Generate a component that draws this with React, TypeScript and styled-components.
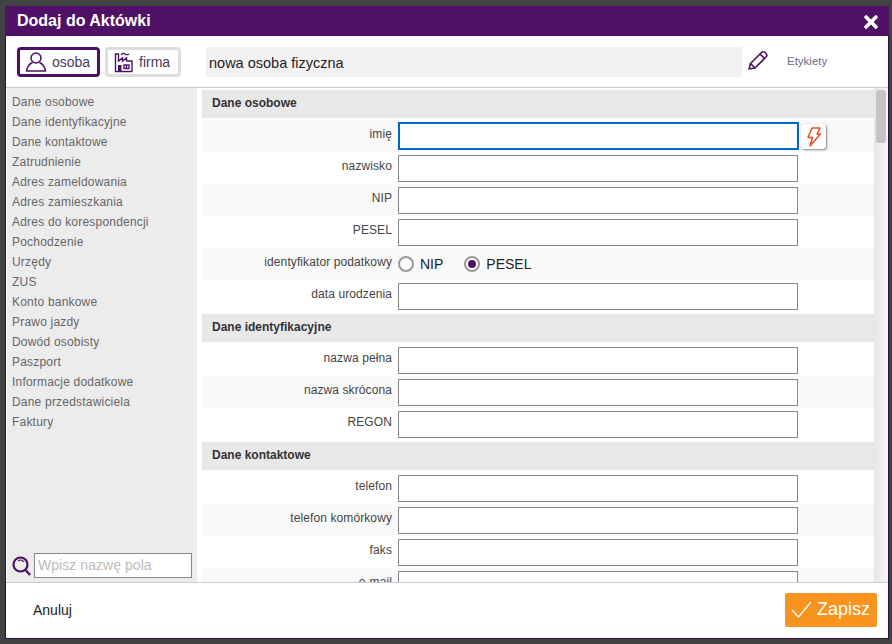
import React from "react";
import styled, { createGlobalStyle } from "styled-components";
import { FaTimes } from "react-icons/fa";

const Global = createGlobalStyle`
  html, body { margin: 0; padding: 0; height: 100%; background: #424242; }
  * { box-sizing: border-box; }
  #root { height: 100%; }
`;
const Page = styled.div`
  width: 892px; height: 644px; padding: 6px 3px 5px 5px; overflow: hidden;
  font-family: "Liberation Sans", Arial, sans-serif;
`;
const Dialog = styled.div`
  height: 633px; display: flex; flex-direction: column; background: #fff;
  border: 1px solid #2e1040; border-top: 0;
`;
const TitleBar = styled.div`
  flex: 0 0 30px; display: flex; align-items: center; justify-content: space-between;
  background: #4e1165; color: #fff; padding: 0 8px 0 12px; margin: 0 -1px;
`;
const Title = styled.div`font-size: 16px; font-weight: bold;`;
const Close = styled.div`display: flex; font-size: 20px; margin-top: 1px;`;
const Toolbar = styled.div`
  flex: 0 0 52px; display: flex; align-items: flex-start; padding: 11px 0 0 11px;
  border-bottom: 1px solid #ccc;
`;
const TypeButton = styled.div<{ $active?: boolean; $w: number }>`
  width: ${p => p.$w}px; height: 30px; margin-right: 5px; display: flex; align-items: center; gap: 5px;
  padding-left: ${p => (p.$active ? 5 : 6)}px; border-radius: 4px; font-size: 14px; color: #4b3a5c;
  border: 3px solid ${p => (p.$active ? "#4e1165" : "#dedede")};
`;
const NameField = styled.div`
  width: 536px; height: 30px; margin-left: 20px; padding-left: 3px; background: #f2f2f2;
  font-size: 14.5px; line-height: 33px; color: #222;
`;
const PencilWrap = styled.div`margin: 3px 0 0 6px; display: flex;`;
const Tags = styled.div`margin: 8px 0 0 19px; font-size: 11.5px; color: #6f6780;`;
const Body = styled.div`flex: 1; min-height: 0; display: flex;`;
const Sidebar = styled.div`
  width: 190px; margin-left: 1px; background: #ececec; padding-top: 4px; display: flex; flex-direction: column;
`;
const NavItem = styled.div`height: 20px; line-height: 20px; padding-left: 5px; font-size: 12px; letter-spacing: .2px; color: #666;`;
const SearchRow = styled.div`
  margin-top: auto; display: flex; align-items: center; padding: 0 5px 4px 5px; gap: 3px;
`;
const SearchInput = styled.div`
  flex: 1; height: 25px; border: 1px solid #888; background: #fff; padding-left: 3px;
  font-size: 14px; line-height: 23px; letter-spacing: .05px; color: #bbb;
`;
const Main = styled.div`flex: 1; min-width: 0; padding: 2px 0 0 5px; overflow: hidden;`;
const SectionHead = styled.div`
  height: 28px; line-height: 27px; padding-left: 10px; background: #e8e8e8;
  font-size: 12px; font-weight: bold; color: #333; margin-bottom: 2px;
`;
const Section = styled.section`margin-bottom: 2px;`;
const Row = styled.div<{ $stripe?: boolean }>`
  height: 32px; display: flex; align-items: flex-start; background: ${p => (p.$stripe ? "#f9f9f9" : "#fff")};
`;
const Label = styled.div`
  width: 196px; padding-right: 6px; text-align: right; font-size: 12px; letter-spacing: .1px; line-height: 28px; color: #444; white-space: nowrap;
`;
const Field = styled.div<{ $focus?: boolean }>`
  width: ${p => (p.$focus ? 401 : 400)}px; height: ${p => (p.$focus ? 28 : 27)}px; margin-top: ${p => (p.$focus ? 2 : 3)}px; background: #fff;
  border: ${p => (p.$focus ? "2px solid #0066cc" : "1px solid #888")};
`;
const FlashButton = styled.div`
  width: 25px; height: 25px; margin: 4px 0 0 2px; display: flex; align-items: center; justify-content: center;
  background: #fff; border-radius: 3px; box-shadow: 1px 1px 2px #888, 0 0 1px #aaa;
`;
const RadioGroup = styled.div`display: flex; align-items: center; height: 32px;`;
const Radio = styled.div<{ $on?: boolean }>`
  width: 16px; height: 16px; border-radius: 50%; border: 2px solid #999; background: #fff;
  display: flex; align-items: center; justify-content: center;
  &::after { content: ""; width: 8px; height: 8px; border-radius: 50%; background: ${p => (p.$on ? "#4e1165" : "transparent")}; }
`;
const RadioLabel = styled.div<{ $gap: number }>`
  font-size: 14px; color: #222; margin: 0 ${p => p.$gap}px 0 6px;
`;
const Track = styled.div`
  flex: 0 0 14px; background: linear-gradient(to right, #e6e6e6, #f6f6f6); padding: 2px 2px 0 2px;
`;
const Thumb = styled.div`height: 53px; background: #c4c4c4; border-radius: 3px;`;
const Footer = styled.div`
  flex: 0 0 56px; border-top: 1px solid #c8cccc; display: flex; align-items: center; justify-content: space-between;
  padding: 0 11px 2px 27px;
`;
const Cancel = styled.div`font-size: 14px; color: #222;`;
const Save = styled.div`
  width: 92px; height: 34px; background: #f7931e; border-radius: 2px; color: #fff;
  font-size: 18px; display: flex; align-items: center; gap: 4px; padding-left: 6px;
`;

const nav = ["Dane osobowe","Dane identyfikacyjne","Dane kontaktowe","Zatrudnienie","Adres zameldowania","Adres zamieszkania","Adres do korespondencji","Pochodzenie","Urzędy","ZUS","Konto bankowe","Prawo jazdy","Dowód osobisty","Paszport","Informacje dodatkowe","Dane przedstawiciela","Faktury"];

const UserIcon = () => (
  <svg width="22" height="22" viewBox="0 0 22 22" fill="none" stroke="#4e1165" strokeWidth="1.5">
    <circle cx="11" cy="7" r="5" />
    <path d="M7.5 11.5C4.5 13 2 16 1.5 20h19C20 16 17.5 13 14.5 11.5" strokeLinejoin="round" />
  </svg>
);
const FactoryIcon = () => (
  <svg width="20" height="22" viewBox="0 0 20 22" fill="none" stroke="#4e1165" strokeWidth="1.4">
    <path d="M1.5 20.5V3h3v7l4-3v3l4-3v3l5.5 0v10.5z" />
    <path d="M7 4c1-2 3-2 4-1s3 1 4 0" strokeWidth="1.2" />
    <rect x="4" y="14" width="3.5" height="6.5" fill="#4e1165" stroke="none" />
    <rect x="10" y="14" width="5" height="3.5" />
    <path d="M12.500 14v3.500" />
  </svg>
);
const PencilIcon = () => (
  <svg width="20" height="20" viewBox="0 0 20 20" fill="none" stroke="#4e1165" strokeWidth="1.6" strokeLinejoin="round">
    <path d="M1 19l1.500-5.500L13.500 2.500c1-1 2.500-1 3.500 0l1 1c1 1 1 2.500 0 3.500L7 18z" />
    <path d="M12 4l4.500 4.500M2.500 13.500L7 18" />
  </svg>
);
const BoltIcon = () => (
  <svg width="16" height="20" viewBox="0 0 16 20" fill="none" stroke="#e8502a" strokeWidth="1.5" strokeLinejoin="round">
    <path d="M6 1h8l-3 6h3.500L4 19l2.500-8.500H2z" />
  </svg>
);
const SearchIcon = () => (
  <svg width="19" height="20" viewBox="0 0 19 20" fill="none" stroke="#4e1165">
    <circle cx="8.500" cy="8.500" r="7" strokeWidth="2.2" />
    <path d="M13.500 14l4.500 5" strokeWidth="2.4" />
    <path d="M6 5c2-1.500 4.500-1 6 1" strokeWidth="1.200" />
  </svg>
);
const CheckIcon = () => (
  <svg width="22" height="18" viewBox="0 0 22 18" fill="none" stroke="#fff" strokeWidth="1.3">
    <path d="M1 9l6.500 7L20 1" />
  </svg>
);

const TextRow = ({ label, stripe, focus, children }: { label: string; stripe?: boolean; focus?: boolean; children?: React.ReactNode }) => (
  <Row $stripe={stripe}>
    <Label>{label}</Label>
    <Field $focus={focus} />
    {children}
  </Row>
);

export default function App() {
  return (
    <Page>
      <Global />
      <Dialog>
        <TitleBar>
          <Title>Dodaj do Aktówki</Title>
          <Close><FaTimes /></Close>
        </TitleBar>
        <Toolbar>
          <TypeButton $active $w={83}><UserIcon />osoba</TypeButton>
          <TypeButton $w={76}><FactoryIcon />firma</TypeButton>
          <NameField>nowa osoba fizyczna</NameField>
          <PencilWrap><PencilIcon /></PencilWrap>
          <Tags>Etykiety</Tags>
        </Toolbar>
        <Body>
          <Sidebar>
            {nav.map(n => <NavItem key={n}>{n}</NavItem>)}
            <SearchRow>
              <SearchIcon />
              <SearchInput>Wpisz nazwę pola</SearchInput>
            </SearchRow>
          </Sidebar>
          <Main>
            <Section>
              <SectionHead>Dane osobowe</SectionHead>
              <TextRow label="imię" stripe focus><FlashButton><BoltIcon /></FlashButton></TextRow>
              <TextRow label="nazwisko" />
              <TextRow label="NIP" stripe />
              <TextRow label="PESEL" />
              <Row $stripe>
                <Label>identyfikator podatkowy</Label>
                <RadioGroup>
                  <Radio /><RadioLabel $gap={21}>NIP</RadioLabel>
                  <Radio $on /><RadioLabel $gap={0}>PESEL</RadioLabel>
                </RadioGroup>
              </Row>
              <TextRow label="data urodzenia" />
            </Section>
            <Section>
              <SectionHead>Dane identyfikacyjne</SectionHead>
              <TextRow label="nazwa pełna" />
              <TextRow label="nazwa skrócona" stripe />
              <TextRow label="REGON" />
            </Section>
            <Section>
              <SectionHead>Dane kontaktowe</SectionHead>
              <TextRow label="telefon" />
              <TextRow label="telefon komórkowy" stripe />
              <TextRow label="faks" />
              <TextRow label="e-mail" stripe />
            </Section>
          </Main>
          <Track><Thumb /></Track>
        </Body>
        <Footer>
          <Cancel>Anuluj</Cancel>
          <Save><CheckIcon />Zapisz</Save>
        </Footer>
      </Dialog>
    </Page>
  );
}
